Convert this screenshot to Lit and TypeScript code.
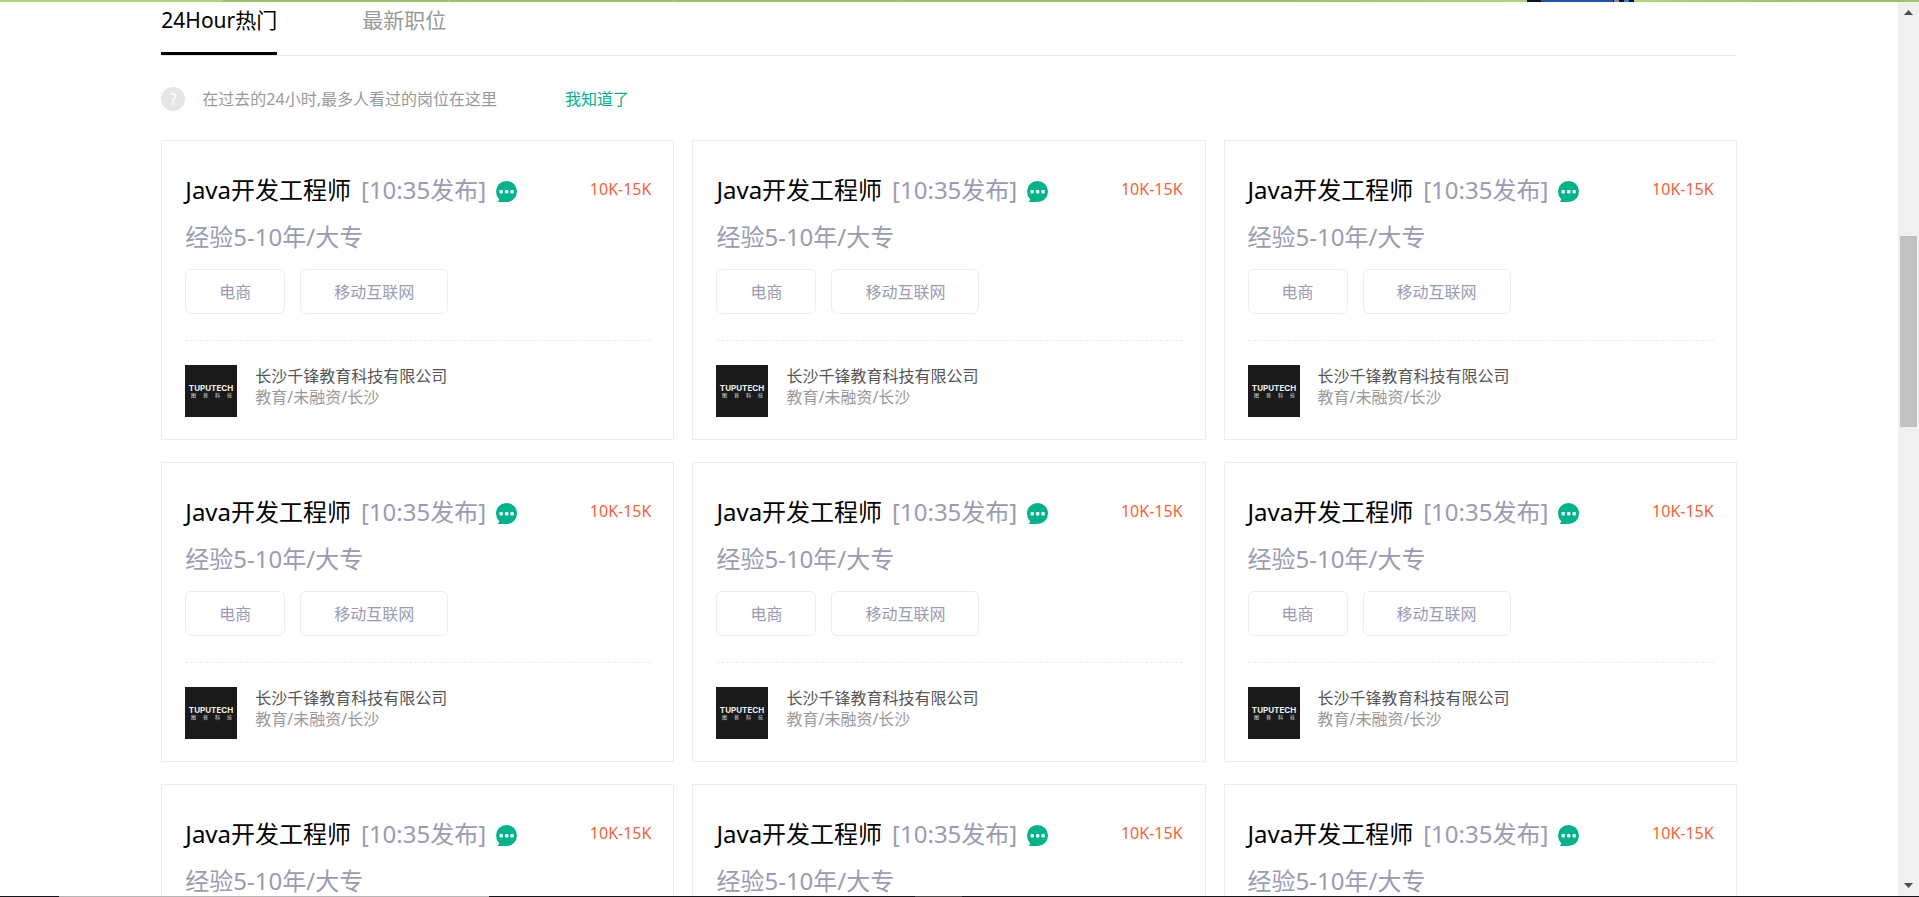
import { LitElement, html, css, svg } from "lit";
import { customElement, property, state } from "lit/decorators.js";

interface Job {
  id: number;
  title: string;
  time: string;
  salary: string;
  need: string;
  tags: string[];
  company: string;
  info: string;
}

const jobs: Job[] = Array.from({ length: 9 }, (_, id) => ({
  id,
  title: "Java开发工程师",
  time: "[10:35发布]",
  salary: "10K-15K",
  need: "经验5-10年/大专",
  tags: ["电商", "移动互联网"],
  company: "长沙千锋教育科技有限公司",
  info: "教育/未融资/长沙",
}));

const chatIcon = svg`
  <circle cx="10.5" cy="10.5" r="10.5" fill="#00b38a"/>
  <path d="M1.5 12 L3.5 17 Q3.6 19.6 1.6 21 Q5 21.4 10.5 21 Z" fill="#00b38a"/>
  <rect x="3.5" y="9" width="3.4" height="3.4" rx="1" fill="#fff"/>
  <rect x="9" y="9" width="3.4" height="3.4" rx="1" fill="#fff"/>
  <rect x="14.4" y="9" width="3.4" height="3.4" rx="1" fill="#fff"/>`;

const logoArt = svg`
  <rect width="52" height="52" fill="#1a1a1a"/>
  <text class="brand" x="26" y="26" text-anchor="middle">TUPUTECH</text>
  <g class="brand-cn" text-anchor="middle">
    <text x="8.5" y="32">图</text>
    <text x="20.5" y="32">普</text>
    <text x="32.5" y="32">科</text>
    <text x="44.5" y="32">技</text>
  </g>`;

@customElement("job-card")
export class JobCard extends LitElement {
  @property({ attribute: false }) job!: Job;

  static styles = css`
    :host {
      display: block;
      box-sizing: border-box;
      border: 1px solid #eaeeed;
      padding: 28px 22px 22px 23px;
      background: #fff;
    }
    .head {
      display: flex;
      align-items: center;
      height: 38px;
      font-size: 24px;
      white-space: nowrap;
    }
    .title {
      margin: 0;
      font-size: 24px;
      font-weight: inherit;
      color: #000;
    }
    .title a {
      color: inherit;
      text-decoration: none;
    }
    .time {
      margin-left: 10px;
      color: #9a9bb3;
    }
    .chat {
      margin: 6px 0 0 10px;
      padding: 0;
      border: 0;
      background: none;
      line-height: 0;
      cursor: pointer;
    }
    .salary {
      margin-left: auto;
      padding-top: 2px;
      font-size: 16px;
      color: #fd5f39;
    }
    .need {
      margin: 11px 0 13px;
      font-size: 24px;
      line-height: 38px;
      color: #9a9bb3;
    }
    .tags {
      display: flex;
      gap: 15px;
      margin: 0;
      padding: 0;
      list-style: none;
    }
    .tag {
      padding: 1px 33px 0;
      border: 1px solid #eceeed;
      border-radius: 6px;
      font-size: 16px;
      line-height: 42px;
      color: #9a9bb3;
    }
    .firm {
      display: flex;
      gap: 18px;
      margin-top: 26px;
      padding-top: 24px;
      border-top: 1px dashed #ededed;
    }
    .logo {
      flex: none;
      width: 52px;
      height: 52px;
    }
    .brand {
      font: 700 8px Inter, sans-serif;
      fill: #f2f2f2;
    }
    .brand-cn {
      font: 400 5px "Noto Sans CJK SC", sans-serif;
      fill: #e0e0e0;
    }
    .names {
      padding-top: 1px;
    }
    .name,
    .info {
      margin: 0;
      font-size: 16px;
      line-height: 21px;
      color: #555;
    }
    .info {
      color: #999;
    }
  `;

  render() {
    const j = this.job;
    return html`
      <div class="head">
        <h3 class="title"><a href="#job-${j.id}">${j.title}</a></h3>
        <span class="time">${j.time}</span>
        <button class="chat" type="button" aria-label="聊一聊">
          <svg width="21" height="21" viewBox="0 0 21 21">${chatIcon}</svg>
        </button>
        <span class="salary">${j.salary}</span>
      </div>
      <p class="need">${j.need}</p>
      <ul class="tags">
        ${j.tags.map((t) => html`<li class="tag">${t}</li>`)}
      </ul>
      <div class="firm">
        <svg class="logo" viewBox="0 0 52 52" aria-hidden="true">${logoArt}</svg>
        <div class="names">
          <p class="name">${j.company}</p>
          <p class="info">${j.info}</p>
        </div>
      </div>
    `;
  }
}

@customElement("app-root")
export class AppRoot extends LitElement {
  @state() private tab = 0;

  static styles = css`
    :host {
      display: flex;
      flex-direction: column;
      height: 100vh;
      overflow: hidden;
      background: #fff;
      font-family: "Noto Sans", "Noto Sans CJK SC", sans-serif;
      font-weight: 400;
    }
    button {
      font-family: inherit;
      font-weight: inherit;
      cursor: pointer;
    }
    .banner {
      flex: none;
      display: block;
      width: 100%;
      height: 2px;
    }
    .view {
      flex: 1;
      min-height: 0;
      display: flex;
    }
    .page {
      flex: 1;
      overflow: hidden;
    }
    .content {
      width: 83%;
      margin: 0 auto;
    }
    .tabs {
      display: flex;
      gap: 85px;
      height: 53px;
      border-bottom: 1px solid #e6e6e6;
    }
    .tab {
      height: 53px;
      padding: 0 0 14px;
      border: 0;
      border-bottom: 3px solid transparent;
      background: none;
      font-size: 21px;
      line-height: 36px;
      color: #999;
    }
    .tab.on {
      color: #000;
      border-bottom-color: #000;
    }
    .hint {
      display: flex;
      align-items: center;
      height: 24px;
      margin: 31px 0 29px;
      font-size: 16px;
      line-height: 22px;
      color: #999;
    }
    .mark {
      width: 24px;
      margin-right: 17px;
      border-radius: 50%;
      background: #e5e5e5;
      line-height: 24px;
      text-align: center;
      color: #fff;
    }
    .ok {
      margin-left: 68px;
      padding: 0;
      border: 0;
      background: none;
      font-size: 16px;
      line-height: 22px;
      color: #00b38a;
    }
    .grid {
      display: grid;
      grid-template-columns: repeat(3, 1fr);
      gap: 22px 18px;
    }
    .bar {
      flex: none;
      display: flex;
      flex-direction: column;
      width: 21px;
      background: #f0f0f0;
    }
    .arrow {
      height: 21px;
      padding: 0;
      border: 0;
      background: none;
      line-height: 0;
    }
    .track {
      flex: 1;
      display: grid;
      grid-template-rows: 213fr 191fr 448fr;
      padding: 0 2px;
    }
    .thumb {
      grid-row: 2;
      background: #c1c1c1;
    }
    .edge {
      flex: none;
      display: grid;
      grid-template-columns: 59fr 430fr 426fr 47fr 957fr;
      height: 1px;
      background: #14141c;
    }
    .lit {
      grid-column: 2;
      background: #b4b4b4;
    }
    .dim {
      grid-column: 4;
      background: #444;
    }
  `;

  render() {
    return html`
      <svg class="banner" viewBox="0 0 1919 2" preserveAspectRatio="none" aria-hidden="true">
        <defs>
          <linearGradient id="rise"><stop stop-color="#9dc562" /><stop offset="1" stop-color="#b1d67a" /></linearGradient>
          <linearGradient id="fall"><stop stop-color="#b1d67a" /><stop offset="1" stop-color="#9dc562" /></linearGradient>
        </defs>
        <rect width="1919" height="2" fill="#9dc562" />
        <rect width="223" height="2" fill="#b1d67a" />
        <rect x="1300" width="227" height="2" fill="url(#rise)" />
        <rect x="1634" width="160" height="2" fill="url(#fall)" />
        <rect x="448" width="1" height="2" fill="#b1d67a" />
        <rect x="673" width="1" height="2" fill="#b1d67a" />
        <rect x="898" width="1" height="2" fill="#b1d67a" />
        <rect x="1794" width="1" height="2" fill="#b1d67a" />
        <rect x="1527" width="107" height="2" fill="#10131f" />
        <rect x="1541" width="72" height="2" fill="#2450b8" />
        <rect x="1614" width="5" height="2" fill="#8a8a90" />
        <rect x="1624" width="5" height="2" fill="#2f86d8" />
      </svg>
      <div class="view">
        <main class="page">
          <div class="content">
            <nav class="tabs">
              ${["24Hour热门", "最新职位"].map(
                (t, i) => html`<button
                  type="button"
                  class="tab ${this.tab === i ? "on" : ""}"
                  @click=${() => (this.tab = i)}
                >${t}</button>`
              )}
            </nav>
            <div class="hint">
              <span class="mark">?</span>
              <span>在过去的24小时,最多人看过的岗位在这里</span>
              <button class="ok" type="button">我知道了</button>
            </div>
            <section class="grid">
              ${jobs.map((j) => html`<job-card .job=${j}></job-card>`)}
            </section>
          </div>
        </main>
        <div class="bar">
          <button class="arrow" type="button" aria-label="向上滚动">
            <svg width="9" height="5" viewBox="0 0 9 5"><path d="M4.5 0L9 5H0Z" fill="#505050" /></svg>
          </button>
          <div class="track"><div class="thumb"></div></div>
          <button class="arrow" type="button" aria-label="向下滚动">
            <svg width="9" height="5" viewBox="0 0 9 5"><path d="M4.5 5L9 0H0Z" fill="#505050" /></svg>
          </button>
        </div>
      </div>
      <div class="edge"><div class="lit"></div><div class="dim"></div></div>
    `;
  }
}
